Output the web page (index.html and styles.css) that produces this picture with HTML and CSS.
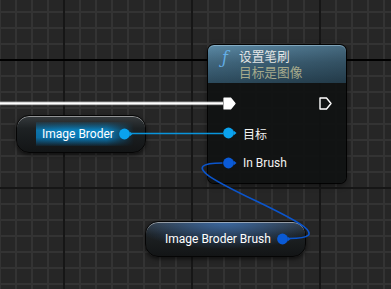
FILE: index.html
```html
<!DOCTYPE html>
<html>
<head>
<meta charset="utf-8">
<link rel="stylesheet" href="styles.css">
</head>
<body>
<div class="graph">
  <div class="origin-line"></div>

  <div class="node fn">
    <div class="fn-head">
      <span class="fn-icon">ƒ</span>
      <div class="fn-titles">
        <div class="fn-title">设置笔刷</div>
        <div class="fn-sub">目标是图像</div>
      </div>
    </div>
    <div class="fn-body">
      <div class="row exec-row">
        <svg class="exec" width="13" height="13" viewBox="0 0 13 13"><path d="M1 1 H7.5 L12 6.5 L7.5 12 H1 Z" fill="#fff" stroke="#fff" stroke-width="1.2" stroke-linejoin="round"/></svg>
        <svg class="exec" width="13" height="13" viewBox="0 0 13 13"><path d="M1 1 H7.5 L12 6.5 L7.5 12 H1 Z" fill="none" stroke="#fff" stroke-width="1.4" stroke-linejoin="round"/></svg>
      </div>
      <div class="row">
        <svg class="pin" width="14" height="12" viewBox="0 0 14 12"><circle cx="5.5" cy="6" r="5.4" fill="#0aa2ee"/><path d="M10.5 3.5 L13.5 6 L10.5 8.5 Z" fill="#0aa2ee"/></svg>
        <span class="label">目标</span>
      </div>
      <div class="row">
        <svg class="pin" width="14" height="12" viewBox="0 0 14 12"><circle cx="5.5" cy="6" r="5.4" fill="#0a5ad6"/><path d="M10.5 3.5 L13.5 6 L10.5 8.5 Z" fill="#0a5ad6"/></svg>
        <span class="label">In Brush</span>
      </div>
    </div>
  </div>

  <div class="node var var-a">
    <div class="glow"></div>
    <span class="var-label">Image Broder</span>
    <svg class="pin" width="14" height="12" viewBox="0 0 14 12"><circle cx="5.5" cy="6" r="5.4" fill="#0aa2ee"/><path d="M10.5 3.5 L13.5 6 L10.5 8.5 Z" fill="#0aa2ee"/></svg>
  </div>

  <div class="node var var-b">
    <span class="var-label">Image Broder Brush</span>
    <svg class="pin" width="14" height="12" viewBox="0 0 14 12"><circle cx="5.5" cy="6" r="5.4" fill="#0a5ad6"/><path d="M10.5 3.5 L13.5 6 L10.5 8.5 Z" fill="#0a5ad6"/></svg>
  </div>

  <svg class="wires" width="391" height="289" viewBox="0 0 391 289">
    <line x1="0" y1="103.3" x2="223" y2="103.3" stroke="rgba(255,255,255,0.35)" stroke-width="4"/>
    <line x1="0" y1="103.3" x2="223" y2="103.3" stroke="#ffffff" stroke-width="2.2"/>
    <line x1="129.5" y1="133.5" x2="223" y2="133.5" stroke="#0995dc" stroke-width="1.5"/>
    <path d="M289 238.5 C379 238.5 132 163 222.5 163" fill="none" stroke="#0b55cc" stroke-width="1.6"/>
  </svg>
</div>
</body>
</html>
```

FILE: styles.css
```css
html, body {
  margin: 0;
  padding: 0;
  background: #262626;
}

.graph {
  position: relative;
  width: 391px;
  height: 289px;
  overflow: hidden;
  font-family: Roboto, "Noto Sans CJK SC", sans-serif;
  background-color: #262626;
  background-image:
    linear-gradient(to right, #161616 2px, transparent 2px),
    linear-gradient(to bottom, #161616 2px, transparent 2px),
    linear-gradient(to right, #333333 2px, transparent 2px),
    linear-gradient(to bottom, #333333 2px, transparent 2px);
  background-size: 128px 128px, 128px 128px, 16px 16px, 16px 16px;
  background-position: 63px 0, 0 59px, 15px 0, 0 11px;
}

.origin-line {
  position: absolute;
  left: 0;
  top: 59px;
  width: 391px;
  height: 2px;
  background: #000;
}

.node {
  position: absolute;
}

/* Function node */
.fn {
  left: 208px;
  top: 45px;
  width: 138px;
  height: 138px;
  border-radius: 6px;
  background: rgba(16, 18, 18, 0.93);
  box-shadow: 0 0 0 1px rgba(0, 0, 0, 0.9), 0 2px 6px rgba(0, 0, 0, 0.6);
  display: flex;
  flex-direction: column;
}

.fn-head {
  height: 38px;
  box-sizing: border-box;
  padding: 4px 0 0 14px;
  display: flex;
  border-radius: 6px 6px 0 0;
  background:
    linear-gradient(90deg, rgba(0, 0, 0, 0) 0%, rgba(0, 0, 0, 0.22) 100%),
    linear-gradient(180deg, #5c8aa6 0%, #41677e 45%, #2c4a5c 100%);
  box-shadow: inset 0 1px 0 rgba(170, 205, 225, 0.55);
}

.fn-icon {
  width: 17px;
  font-family: "DejaVu Serif", serif;
  font-style: italic;
  font-size: 16px;
  line-height: 18px;
  color: #63aee6;
}

.fn-titles {
  display: flex;
  flex-direction: column;
}

.fn-title {
  font-size: 12.7px;
  line-height: 16px;
  color: #e4e6e6;
}

.fn-sub {
  font-size: 12.7px;
  line-height: 16px;
  color: #a6aa8c;
}

.fn-body {
  padding: 5px 14px 5px 15px;
  display: flex;
  flex-direction: column;
}

.row {
  height: 30px;
  display: flex;
  align-items: center;
}

.exec-row {
  justify-content: space-between;
}

.exec {
  display: block;
}

.pin {
  display: block;
  flex: none;
}

.row .pin {
  margin-right: 6px;
}

.label {
  font-size: 12px;
  color: #f2f2f2;
}

/* Variable nodes */
.var {
  box-sizing: border-box;
  display: flex;
  align-items: center;
  border-radius: 13px;
  border: 1px solid #050505;
  background: linear-gradient(180deg, #353a3d 0%, #1d2123 35%, #131516 100%);
  box-shadow: inset 0 1px 0 rgba(210, 210, 210, 0.6), 0 2px 4px rgba(0, 0, 0, 0.6);
}

.var-label {
  position: relative;
  font-size: 12px;
  color: #ffffff;
  margin-right: 5px;
  white-space: nowrap;
}

.var .pin {
  position: relative;
}

.var-a {
  left: 16px;
  top: 115px;
  width: 130px;
  height: 38px;
  padding-left: 25px;
}

.glow {
  position: absolute;
  left: 19px;
  top: 6px;
  width: 98px;
  height: 24px;
  background: linear-gradient(180deg, rgba(10, 130, 200, 0.1) 0%, rgba(10, 135, 200, 0.95) 35%, rgba(8, 125, 190, 0.95) 65%, rgba(10, 110, 170, 0.1) 100%);
  -webkit-mask-image: linear-gradient(90deg, rgba(0,0,0,0.85) 0%, #000 30%, #000 72%, rgba(0,0,0,0) 100%);
  mask-image: linear-gradient(90deg, rgba(0,0,0,0.85) 0%, #000 30%, #000 72%, rgba(0,0,0,0) 100%);
}

.var-b {
  left: 145px;
  top: 221px;
  width: 161px;
  height: 36px;
  padding-left: 19px;
  background:
    radial-gradient(ellipse 60% 80% at 50% 0%, rgba(60, 115, 185, 0.8), rgba(60, 115, 185, 0) 100%),
    linear-gradient(180deg, #353a3d 0%, #1d2123 35%, #131516 100%);
}

.var-b .var-label {
  margin-right: 6px;
}

.wires {
  position: absolute;
  left: 0;
  top: 0;
}
```
